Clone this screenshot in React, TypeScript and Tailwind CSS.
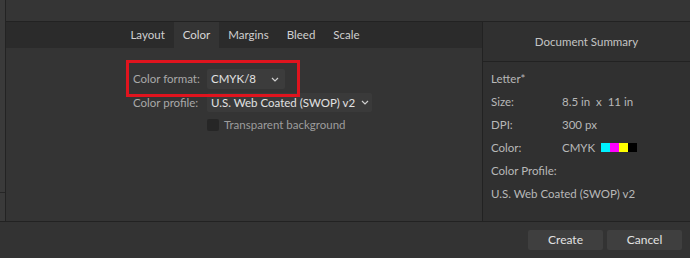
import React from "react";

const tabs = ["Layout", "Color", "Margins", "Bleed", "Scale"];

const summary: { label: string; value?: string; swatch?: boolean }[] = [
  { label: "Letter*" },
  { label: "Size:", value: "8.5 in  x  11 in" },
  { label: "DPI:", value: "300 px" },
  { label: "Color:", value: "CMYK", swatch: true },
  { label: "Color Profile:" },
  { label: "U.S. Web Coated (SWOP) v2" },
];

function Chevron() {
  return (
    <svg width="8" height="5" viewBox="0 0 8 5" className="shrink-0">
      <polyline points="1,1 4,4 7,1" fill="none" stroke="#cfcfcf" strokeWidth="1.2" />
    </svg>
  );
}

export default function App() {
  return (
    <div
      className="flex flex-col w-[690px] h-[258px] bg-[#343434] text-[11.5px] text-[#d2d2d2] overflow-hidden whitespace-nowrap"
      style={{ fontFamily: 'Lato, "Noto Sans", sans-serif' }}
    >
      <div className="flex h-[222px] border-b border-[#222]">
        {/* Left strip */}
        <div className="flex flex-col w-[6px] shrink-0 border-r border-[#232323] bg-[#3a3a3a]">
          <div className="h-[193px] border-b border-[#262626]" />
          <div className="flex-1" />
        </div>

        <div className="flex flex-col flex-1 min-w-0">
          {/* Top bar */}
          <div className="h-[22px] shrink-0 border-b border-[#222] bg-[#353535]" />

          <div className="flex flex-1 min-h-0">
            {/* Main */}
            <div className="flex flex-col flex-1 min-w-0">
              <div className="flex justify-center h-[26px] shrink-0 bg-[#2b2b2b] pl-[2px]">
                {tabs.map((t) => (
                  <div
                    key={t}
                    className={
                      t === "Color"
                        ? "flex items-center px-[9px] bg-[#343434] text-[#d8d8d8]"
                        : "flex items-center px-[9px] text-[#d0d0d0]"
                    }
                  >
                    {t}
                  </div>
                ))}
              </div>

              <div className="relative flex flex-col gap-[4px] pt-[21px] pl-[127px]">
                {/* highlight box */}
                <div className="absolute left-[120px] top-[12px] w-[174px] h-[37px] border-[3px] border-[#e0141e]" />

                <div className="flex items-center h-[20px] gap-[9px]">
                  <span className="w-[65px] text-right text-[#a9a9a9]">Color format:</span>
                  <div className="flex items-center justify-between w-[78px] h-[20px] pl-[4px] pr-[6px] bg-[#3c3c3c] rounded-[2px] text-[#e2e2e2]">
                    <span>CMYK/8</span>
                    <Chevron />
                  </div>
                </div>

                <div className="flex items-center h-[19px] gap-[9px]">
                  <span className="w-[65px] text-right text-[#a9a9a9]">Color profile:</span>
                  <div className="flex items-center gap-[6px] h-[19px] pl-[4px] pr-[3px] bg-[#3a3a3a] rounded-[2px] text-[#e2e2e2]">
                    <span>U.S. Web Coated (SWOP) v2</span>
                    <Chevron />
                  </div>
                </div>

                <div className="flex items-center h-[16px] gap-[5px] pl-[74px] mt-[1px]">
                  <div className="w-[12px] h-[12px] rounded-[2px] bg-[#262626]" />
                  <span className="text-[#9d9d9d]">Transparent background</span>
                </div>
              </div>
            </div>

            {/* Right panel */}
            <div className="flex flex-col w-[208px] shrink-0 border-l border-[#222] bg-[#303030]">
              <div className="flex items-center justify-center h-[40px] shrink-0 border-b border-[#222] text-[#c4c4c4]">
                Document Summary
              </div>
              <div className="flex flex-col pt-[5px] pl-[8px]">
                {summary.map((r) => (
                  <div key={r.label} className="flex items-center h-[23px] text-[#b8b8b8]">
                    {r.value ? (
                      <>
                        <span className="w-[71px]">{r.label}</span>
                        <span className="whitespace-pre">{r.value}</span>
                        {r.swatch && (
                          <div className="flex ml-[6px] h-[9px]">
                            <div className="w-[9px] bg-[#00f0ff]" />
                            <div className="w-[9px] bg-[#ff00ff]" />
                            <div className="w-[9px] bg-[#ffff00]" />
                            <div className="w-[9px] bg-black" />
                          </div>
                        )}
                      </>
                    ) : (
                      <span>{r.label}</span>
                    )}
                  </div>
                ))}
              </div>
            </div>
          </div>
        </div>
      </div>

      {/* Bottom bar */}
      <div className="flex flex-1 items-center justify-end gap-[4px] pr-[8px] bg-[#333]">
        <button className="w-[75px] h-[20px] rounded-[2px] bg-[#3f3f3f] text-[#e2e2e2] text-[12px]">Create</button>
        <button className="w-[75px] h-[20px] rounded-[2px] bg-[#3f3f3f] text-[#e2e2e2] text-[12px]">Cancel</button>
      </div>
    </div>
  );
}
